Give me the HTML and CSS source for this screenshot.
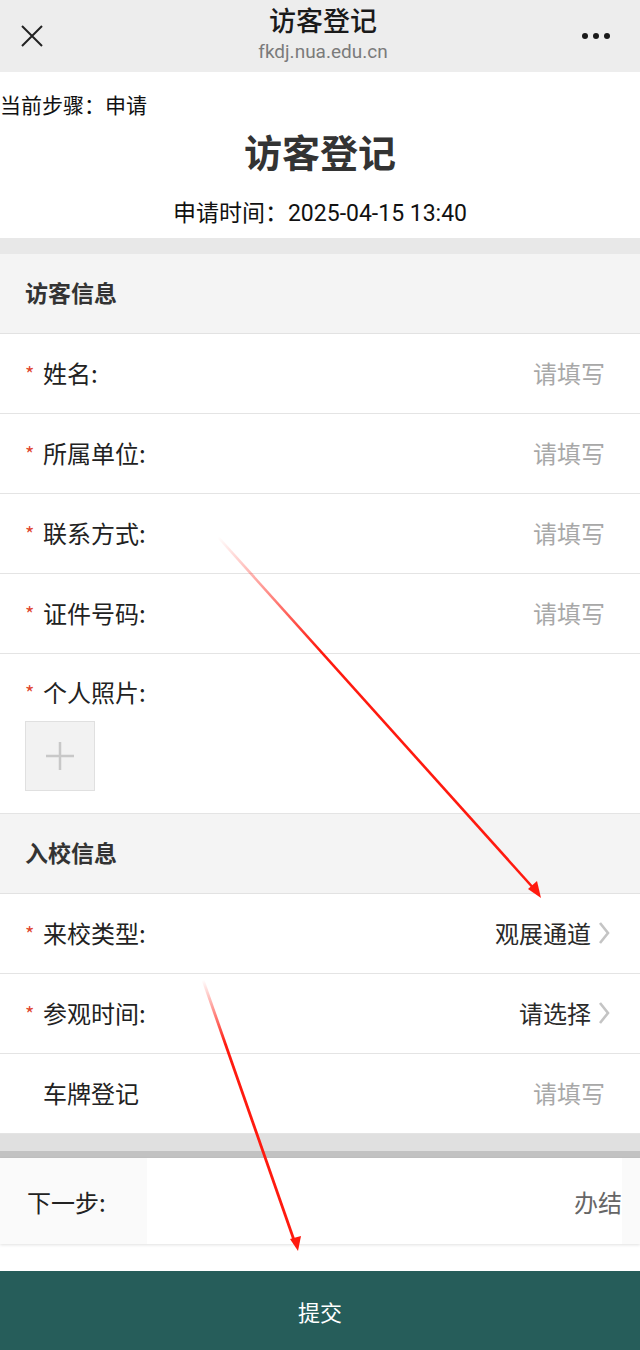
FILE: index.html
```html
<!DOCTYPE html>
<html lang="zh-CN">
<head>
  <meta charset="UTF-8">
  <meta name="viewport" content="width=device-width, initial-scale=1.0">
  <title>访客登记</title>
  <link rel="stylesheet" href="styles.css">
</head>
<body>

  <div class="navbar">
    <svg class="nav-close" viewBox="0 0 24 24" width="24" height="24">
      <path d="M2 2 L22 22 M22 2 L2 22" stroke="#222" stroke-width="2" fill="none"/>
    </svg>
    <div class="nav-title">
      <div class="nav-name">访客登记</div>
      <div class="nav-url">fkdj.nua.edu.cn</div>
    </div>
    <div class="nav-more"><span></span><span></span><span></span></div>
  </div>

  <div class="head">
    <div class="step">当前步骤：申请</div>
    <h1>访客登记</h1>
    <div class="apply-time">申请时间：2025-04-15 13:40</div>
  </div>

  <div class="gap"></div>

  <div class="section">访客信息</div>
  <div class="row"><span class="req">*</span><span class="label">姓名:</span><span class="placeholder">请填写</span></div>
  <div class="row"><span class="req">*</span><span class="label">所属单位:</span><span class="placeholder">请填写</span></div>
  <div class="row"><span class="req">*</span><span class="label">联系方式:</span><span class="placeholder">请填写</span></div>
  <div class="row"><span class="req">*</span><span class="label">证件号码:</span><span class="placeholder">请填写</span></div>
  <div class="row photo-row">
    <div class="photo-label"><span class="req">*</span><span class="label">个人照片:</span></div>
    <div class="upload">
      <svg viewBox="0 0 32 32" width="32" height="32">
        <path d="M16 2 V30 M2 16 H30" stroke="#c8c8c8" stroke-width="2.5" fill="none"/>
      </svg>
    </div>
  </div>

  <div class="section">入校信息</div>
  <div class="row">
    <span class="req">*</span><span class="label">来校类型:</span>
    <span class="value">观展通道</span>
    <svg class="chevron" viewBox="0 0 14 26" width="14" height="26"><path d="M3 3 L11 13 L3 23" stroke="#c4c4c4" stroke-width="2.6" fill="none"/></svg>
  </div>
  <div class="row">
    <span class="req">*</span><span class="label">参观时间:</span>
    <span class="value">请选择</span>
    <svg class="chevron" viewBox="0 0 14 26" width="14" height="26"><path d="M3 3 L11 13 L3 23" stroke="#c4c4c4" stroke-width="2.6" fill="none"/></svg>
  </div>
  <div class="row"><span class="req blank"></span><span class="label">车牌登记</span><span class="placeholder">请填写</span></div>

  <div class="gap-bottom"></div>

  <div class="next-step">
    <div class="next-label">下一步:</div>
    <div class="next-value">办结</div>
  </div>

  <div class="submit">提交</div>

  <svg class="marks" viewBox="0 0 640 1350" width="640" height="1350">
    <defs>
      <linearGradient id="fade1" gradientUnits="userSpaceOnUse" x1="218" y1="537" x2="320" y2="650">
        <stop offset="0" stop-color="#ff1a0f" stop-opacity="0"/>
        <stop offset="1" stop-color="#ff1a0f" stop-opacity="1"/>
      </linearGradient>
      <linearGradient id="fade2" gradientUnits="userSpaceOnUse" x1="203" y1="980" x2="225" y2="1045">
        <stop offset="0" stop-color="#ff1a0f" stop-opacity="0"/>
        <stop offset="1" stop-color="#ff1a0f" stop-opacity="1"/>
      </linearGradient>
    </defs>
    <path d="M218 537 L536 891" stroke="url(#fade1)" stroke-width="2.6" fill="none"/>
    <path d="M541 898 L528 889 L537 881 Z" fill="#ff1a0f"/>
    <path d="M203 980 L295 1243" stroke="url(#fade2)" stroke-width="2.8" fill="none"/>
    <path d="M298 1251 L290 1239 L301 1236 Z" fill="#ff1a0f"/>
  </svg>

</body>
</html>
```

FILE: styles.css
```css
body {
  margin: 0;
  padding: 0;
  width: 640px;
  position: relative;
  font-family: "Noto Sans CJK SC", "Noto Sans", sans-serif;
  color: #222;
  background: #fff;
}

.navbar {
  height: 72px;
  box-sizing: border-box;
  background: #ededed;
  display: flex;
  align-items: center;
  justify-content: space-between;
  padding: 0 30px 0 20px;
}

.nav-close {
  display: block;
}

.nav-title {
  align-self: flex-start;
  padding: 3px 0 0 20px;
  text-align: center;
}

.nav-name {
  font-size: 27px;
  font-weight: 500;
  line-height: 34px;
  color: #1a1a1a;
}

.nav-url {
  padding-top: 4px;
  font-family: "Roboto", "Noto Sans", sans-serif;
  font-size: 19px;
  line-height: 22px;
  color: #7b7b7b;
}

.nav-more {
  display: flex;
  gap: 5px;
}

.nav-more span {
  width: 6px;
  height: 6px;
  border-radius: 50%;
  background: #1a1a1a;
}

.head {
  height: 166px;
  box-sizing: border-box;
  padding-top: 17px;
}

.step {
  font-size: 21px;
  line-height: 30px;
  color: #111;
}

.head h1 {
  margin: 8px 0 0;
  text-align: center;
  font-size: 38px;
  line-height: 48px;
  font-weight: 700;
  color: #333;
}

.apply-time {
  margin-top: 24px;
  text-align: center;
  font-family: "Roboto", "Noto Sans CJK SC", sans-serif;
  font-size: 23px;
  line-height: 30px;
  color: #111;
}

.gap {
  height: 16px;
  background: #e8e8e8;
}

.section {
  height: 79px;
  background: #f4f4f4;
  border-bottom: 1px solid #e2e2e2;
  display: flex;
  align-items: center;
  padding: 0 0 4px 25px;
  box-sizing: border-box;
  height: 80px;
  font-size: 23px;
  font-weight: 700;
  color: #333;
}

.row {
  height: 80px;
  box-sizing: border-box;
  border-bottom: 1px solid #e4e4e4;
  display: flex;
  align-items: center;
  padding: 0 35px 2px 25px;
  font-size: 24px;
  color: #222;
}

.req {
  width: 18px;
  color: #e0462e;
  font-size: 20px;
  padding-top: 2px;
}

.label {
  flex: 1;
}

.placeholder {
  color: #a8a8a8;
}

.value {
  color: #2a2a2a;
}

.chevron {
  margin-left: 6px;
  margin-right: -6px;
}

.photo-row {
  height: 160px;
  display: block;
  padding-top: 20px;
}

.photo-label {
  display: flex;
  align-items: center;
}

.upload {
  margin-top: 12px;
  width: 68px;
  height: 68px;
  border: 1px solid #e0e0e0;
  background: #f2f2f2;
  display: flex;
  align-items: center;
  justify-content: center;
}

.gap-bottom {
  height: 17px;
  background: #e0e0e0;
  border-bottom: 7px solid #c2c2c2;
}

.next-step {
  height: 86px;
  display: flex;
  align-items: stretch;
  background: #fafafa;
  padding: 0 18px 0 2px;
  box-shadow: 0 1px 3px rgba(0, 0, 0, 0.12);
  font-size: 24px;
}

.next-label {
  width: 120px;
  padding-left: 25px;
  box-sizing: border-box;
  display: flex;
  align-items: center;
  color: #222;
}

.next-value {
  flex: 1;
  background: #fff;
  display: flex;
  align-items: center;
  justify-content: flex-end;
  color: #666;
  margin-left: 25px;
}

.submit {
  margin-top: 27px;
  height: 80px;
  background: #265d5a;
  color: #fff;
  font-size: 22px;
  display: flex;
  align-items: center;
  justify-content: center;
}

.marks {
  position: absolute;
  left: 0;
  top: 0;
  pointer-events: none;
}
```
